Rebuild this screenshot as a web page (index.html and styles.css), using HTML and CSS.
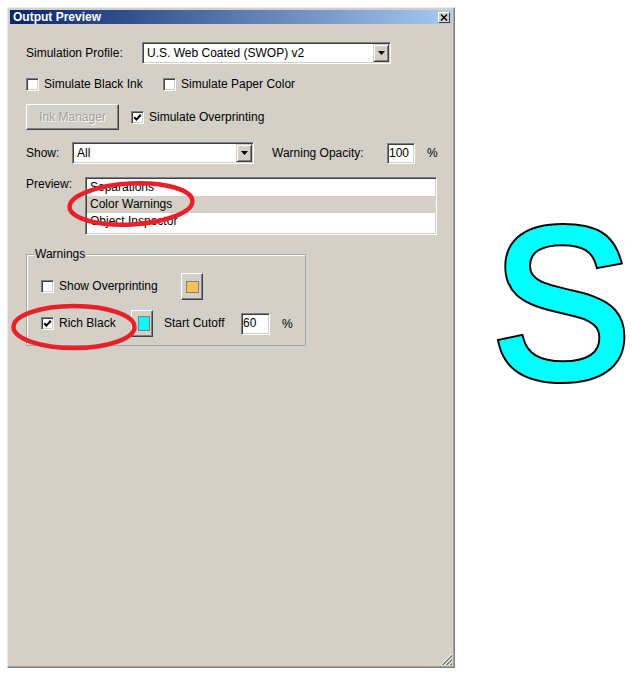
FILE: index.html
```html
<!DOCTYPE html>
<html lang="en">
<head>
    <meta charset="UTF-8">
    <title>Output Preview</title>
    <link rel="stylesheet" href="styles.css">
</head>
<body>
    <div class="page">
        <div class="window">
            <div class="titlebar">
                <span class="title">Output Preview</span>
                <span class="close">
                    <svg width="8" height="7" viewBox="0 0 8 7"><path d="M1 0.5 L7 6.5 M7 0.5 L1 6.5" stroke="#000" stroke-width="1.4"/></svg>
                </span>
            </div>

            <div class="content">
                <div class="row row-profile">
                    <span class="lbl lbl-profile">Simulation Profile:</span>
                    <div class="select select-profile">
                        <span class="select-text">U.S. Web Coated (SWOP) v2</span>
                        <span class="drop"><svg width="7" height="4" viewBox="0 0 7 4"><path d="M0 0 H7 L3.5 4 Z" fill="#000"/></svg></span>
                    </div>
                </div>

                <div class="row row-sim">
                    <label class="check check-black"><span class="box"></span>Simulate Black Ink</label>
                    <label class="check"><span class="box"></span>Simulate Paper Color</label>
                </div>

                <div class="row row-ink">
                    <button class="btn btn-disabled">Ink Manager</button>
                    <label class="check check-over"><span class="box"><svg width="9" height="9" viewBox="0 0 9 9"><path d="M1.2 4.2 L3.4 6.6 L7.8 1.8" fill="none" stroke="#000" stroke-width="2"/></svg></span>Simulate Overprinting</label>
                </div>

                <div class="row row-show">
                    <span class="lbl lbl-show">Show:</span>
                    <div class="select select-show">
                        <span class="select-text">All</span>
                        <span class="drop"><svg width="7" height="4" viewBox="0 0 7 4"><path d="M0 0 H7 L3.5 4 Z" fill="#000"/></svg></span>
                    </div>
                    <span class="lbl lbl-opacity">Warning Opacity:</span>
                    <span class="field field-opacity">100</span>
                    <span class="pct">%</span>
                </div>

                <div class="row row-preview">
                    <span class="lbl lbl-preview">Preview:</span>
                    <div class="listbox">
                        <div class="item">Separations</div>
                        <div class="item item-selected">Color Warnings</div>
                        <div class="item">Object Inspector</div>
                    </div>
                </div>

                <fieldset class="group">
                    <legend>Warnings</legend>
                    <div class="grow">
                        <label class="check check-overprint"><span class="box"></span>Show Overprinting</label>
                        <span class="swatch"><span class="chip chip-orange"></span></span>
                    </div>
                    <div class="grow grow-black">
                        <label class="check check-rich"><span class="box"><svg width="9" height="9" viewBox="0 0 9 9"><path d="M1.2 4.2 L3.4 6.6 L7.8 1.8" fill="none" stroke="#000" stroke-width="2"/></svg></span>Rich Black</label>
                        <span class="swatch"><span class="chip chip-cyan"></span></span>
                        <span class="lbl lbl-cutoff">Start Cutoff</span>
                        <span class="field field-cutoff">60</span>
                        <span class="pct">%</span>
                    </div>
                </fieldset>
            </div>

            <span class="grip">
                <svg width="12" height="12" viewBox="0 0 12 12">
                    <path d="M12 1 L1 12 M12 5 L5 12 M12 9 L9 12" stroke="#ffffff" stroke-width="1"/>
                    <path d="M12 2 L2 12 M12 3 L3 12 M12 6 L6 12 M12 7 L7 12 M12 10 L10 12 M12 11 L11 12" stroke="#808080" stroke-width="1"/>
                </svg>
            </span>

            <!-- red marks drawn over the dialog, page coordinates -->
            <svg class="marks" viewBox="8 8 446 659">
                <ellipse cx="131" cy="204" rx="61.5" ry="20.5" transform="rotate(-3 131 204)"/>
                <ellipse cx="74" cy="327" rx="60.5" ry="21"/>
            </svg>
        </div>

        <div class="big-s">
            <span class="s-back">S</span>
            <span class="s-front">S</span>
        </div>
    </div>
</body>
</html>
```

FILE: styles.css
```css
body {
    margin: 0;
    background: #ffffff;
    font-family: "Liberation Sans", Arial, sans-serif;
    font-size: 12px;
    color: #000000;
}
.page {
    display: flex;
    align-items: flex-start;
}
.window {
    position: relative;
    display: flex;
    flex: none;
    flex-direction: column;
    box-sizing: border-box;
    width: 448px;
    height: 661px;
    margin: 7px 0 0 7px;
    padding: 2px;
    background: #d4d0c8;
    border: 1px solid;
    border-color: #ecebe6 #808080 #808080 #ecebe6;
    box-shadow: inset -1px -1px #a5a29b;
}
.titlebar {
    display: flex;
    align-items: center;
    justify-content: space-between;
    height: 14px;
    padding: 0 2px 0 3px;
    background: linear-gradient(to right, #0a246a, #a6caf0);
}
.title {
    color: #ffffff;
    font-weight: bold;
    font-size: 12px;
    line-height: 14px;
}
.close {
    display: flex;
    align-items: center;
    justify-content: center;
    box-sizing: border-box;
    width: 12px;
    height: 11px;
    background: #d4d0c8;
    border: 1px solid;
    border-color: #ffffff #404040 #404040 #ffffff;
}
.content {
    padding-left: 16px;
}
.row {
    display: flex;
    align-items: center;
}
.lbl {
    flex: none;
    line-height: 15px;
}

/* sunken controls */
.select, .field, .listbox {
    box-sizing: border-box;
    background: #ffffff;
    border: 1px solid;
    border-color: #808080 #ffffff #ffffff #808080;
    box-shadow: inset 1px 1px #404040, inset -1px -1px #d4d0c8;
}
.select {
    display: flex;
    align-items: center;
    height: 22px;
}
.select-text {
    flex: 1;
    padding-left: 4px;
}
.drop {
    display: flex;
    align-items: center;
    justify-content: center;
    box-sizing: border-box;
    width: 16px;
    height: 18px;
    margin-right: 1px;
    background: #d4d0c8;
    border: 1px solid;
    border-color: #d4d0c8 #404040 #404040 #d4d0c8;
    box-shadow: inset 1px 1px #ffffff, inset -1px -1px #808080;
}
.field {
    height: 21px;
    padding-left: 1px;
    line-height: 19px;
}

/* checkboxes */
.check {
    display: flex;
    align-items: center;
    flex: none;
    gap: 5px;
    line-height: 15px;
}
.box {
    display: flex;
    align-items: center;
    justify-content: center;
    box-sizing: border-box;
    width: 13px;
    height: 13px;
    background: #ffffff;
    border: 1px solid;
    border-color: #808080 #ffffff #ffffff #808080;
    box-shadow: inset 1px 1px #404040, inset -1px -1px #d4d0c8;
}

/* row 1 */
.row-profile {
    margin-top: 18px;
}
.lbl-profile {
    width: 116px;
}
.select-profile {
    width: 249px;
}

/* row 2 */
.row-sim {
    height: 15px;
    margin-top: 13px;
}
.check-black {
    width: 137px;
}

/* row 3 */
.row-ink {
    margin-top: 12px;
}
.btn {
    box-sizing: border-box;
    width: 93px;
    height: 26px;
    padding: 0;
    font-family: inherit;
    font-size: 12px;
    background: #d4d0c8;
    border: 1px solid;
    border-color: #ffffff #404040 #404040 #ffffff;
    box-shadow: inset -1px -1px #808080;
}
.btn-disabled {
    color: #a09d96;
    text-shadow: 1px 1px #ffffff;
}
.check-over {
    margin-left: 12px;
}

/* row 4 */
.row-show {
    margin-top: 12px;
}
.lbl-show {
    width: 46px;
}
.select-show {
    width: 182px;
}
.lbl-opacity {
    width: 115px;
    margin-left: 18px;
}
.field-opacity {
    width: 28px;
}
.pct {
    margin-left: 12px;
}

/* row 5 */
.row-preview {
    align-items: flex-start;
    margin-top: 13px;
}
.lbl-preview {
    width: 59px;
    line-height: 14px;
}
.listbox {
    width: 352px;
    height: 58px;
    padding: 1px 1px;
}
.item {
    height: 17px;
    padding-left: 3px;
    line-height: 17px;
}
.item-selected {
    background: #d4d0c8;
}

/* warnings group */
.group {
    box-sizing: border-box;
    width: 280px;
    min-width: 0;
    margin: 12px 0 0;
    padding: 11px 0 8px 7px;
    border: 1px solid #a8a59e;
    box-shadow: inset 1px 1px #ffffff;
}
.group legend {
    padding: 0 1px;
    line-height: 15px;
    background: #d4d0c8;
}
.grow {
    display: flex;
    align-items: center;
    height: 27px;
    padding-left: 7px;
}
.grow-black {
    margin-top: 10px;
}
.check-overprint {
    width: 140px;
}
.check-rich {
    width: 90px;
}
.swatch {
    display: flex;
    align-items: center;
    justify-content: center;
    box-sizing: border-box;
    width: 22px;
    height: 27px;
    background: #d4d0c8;
    border: 1px solid;
    border-color: #ffffff #404040 #404040 #ffffff;
    box-shadow: inset -1px -1px #808080;
}
.chip {
    box-sizing: border-box;
    border: 1px solid #808080;
}
.chip-orange {
    width: 13px;
    height: 12px;
    background: #ffc04f;
}
.chip-cyan {
    width: 12px;
    height: 15px;
    margin-left: 3px;
    background: #00ffff;
}
.lbl-cutoff {
    width: 77px;
    margin-left: 11px;
}
.field-cutoff {
    width: 29px;
    height: 22px;
}

.grip {
    display: flex;
    align-self: flex-end;
    margin-top: auto;
}

.marks {
    position: absolute;
    left: 0;
    top: 0;
    width: 446px;
    height: 659px;
    overflow: visible;
    pointer-events: none;
}
.marks ellipse {
    fill: none;
    stroke: #e8202a;
    stroke-width: 4.5;
}

/* big letter: black copy behind a cyan copy, both in one grid cell */
.big-s {
    display: grid;
    margin: 196px 0 0 37px;
    font-family: "Liberation Sans", Arial, sans-serif;
    font-size: 215px;
    line-height: 1;
    transform: scaleX(0.97);
    transform-origin: left top;
}
.s-back, .s-front {
    grid-area: 1 / 1;
}
.s-back {
    color: #000000;
    -webkit-text-stroke: 8px #000000;
}
.s-front {
    color: #00ffff;
    -webkit-text-stroke: 4px #00ffff;
}
```
